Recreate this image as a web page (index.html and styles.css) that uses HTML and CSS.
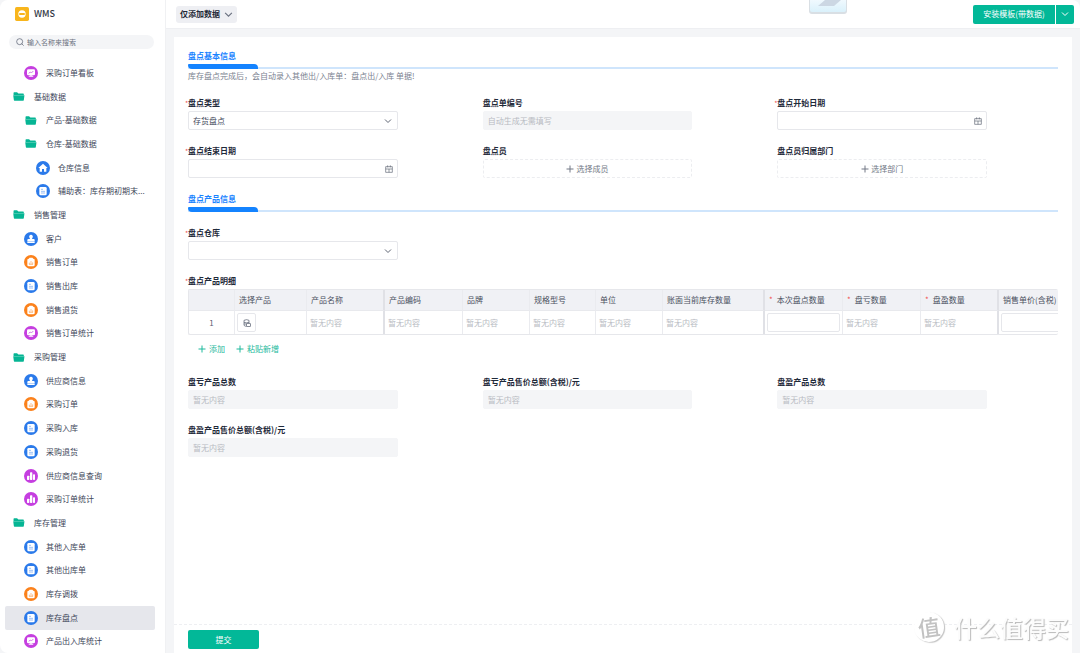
FILE: index.html
```html
<!DOCTYPE html>
<html lang="zh-CN">
<head>
<meta charset="utf-8">
<title>WMS</title>
<link rel="stylesheet" href="styles.css">
</head>
<body>
<svg class="sprite" aria-hidden="true">
  <symbol id="board" viewBox="0 0 42 42"><circle cx="21" cy="21" r="21" fill="#c53ee0"/><rect x="9" y="10" width="24" height="18" rx="4" fill="#fff"/><path d="M14 22l5-4 3 3 6-6" fill="none" stroke="#d478e8" stroke-width="3"/><path d="M13 32h16l-5-4h-6z" fill="#fff"/></symbol>
  <symbol id="bars" viewBox="0 0 42 42"><circle cx="21" cy="21" r="21" fill="#c53ee0"/><rect x="9" y="20" width="7" height="13" rx="2" fill="#fff"/><rect x="18" y="10" width="7" height="23" rx="2" fill="#fff"/><rect x="27" y="16" width="6" height="17" rx="2" fill="#fff"/></symbol>
  <symbol id="doc" viewBox="0 0 42 42"><circle cx="21" cy="21" r="21" fill="#2b7aea"/><rect x="10" y="9" width="22" height="25" rx="4" fill="#fff"/><path d="M15 16h6M15 22h12M15 27h12" stroke="#6aa2f2" stroke-width="2"/></symbol>
  <symbol id="order" viewBox="0 0 42 42"><circle cx="21" cy="21" r="21" fill="#fb811b"/><rect x="10" y="11" width="22" height="23" rx="4" fill="#fff"/><rect x="15" y="8" width="12" height="7" rx="2" fill="#fff"/><path d="M16 28v-5M21 28V18M26 28v-6M15 28h12" fill="none" stroke="#fca45b" stroke-width="2"/></symbol>
  <symbol id="home" viewBox="0 0 42 42"><circle cx="21" cy="21" r="21" fill="#2b7aea"/><path d="M21 8L7 21h4v11h7v-8h6v8h7V21h4z" fill="#fff"/></symbol>
  <symbol id="stamp" viewBox="0 0 42 42"><circle cx="21" cy="21" r="21" fill="#2b7aea"/><path d="M21 8a6 6 0 0 0-4 10l1 3h-5q-3 0-3 3v3h22v-3q0-3-3-3h-5l1-3a6 6 0 0 0-4-10z" fill="#fff"/><rect x="10" y="28" width="22" height="5" fill="#fff"/></symbol>
  <symbol id="folder" viewBox="0 0 36 28"><path d="M1 3q0-2 2-2h9l4 4h15q2 0 2 2v2H1z" fill="#06b594"/><path d="M0 10h35l-2 15q0 2-2 2H4q-2 0-2-2z" fill="#06b594"/></symbol>
  <symbol id="chev" viewBox="0 0 8 8"><path d="M1 2.5l3 3 3-3" fill="none" stroke="currentColor"/></symbol>
  <symbol id="plus" viewBox="0 0 8 8"><path d="M4 .5v7M.5 4h7" fill="none" stroke="currentColor"/></symbol>
  <symbol id="cal" viewBox="0 0 24 24"><path d="M2 5h20v17H2zM2 12h20M8 1v6M16 1v6M12 12v10" fill="none" stroke="currentColor" stroke-width="2"/></symbol>
</svg>
<div class="app">
  <aside class="side">
    <div class="brand">
      <svg class="logo" viewBox="0 0 42 42"><rect width="42" height="42" rx="5" fill="#f8b51c"/><circle cx="21" cy="21" r="11" fill="#fff"/><rect x="12" y="18" width="18" height="6" rx="3" fill="#f8b51c"/></svg>
      <span>WMS</span>
    </div>
    <label class="search">
      <svg viewBox="0 0 24 24"><circle cx="11" cy="11" r="9"/><path d="M17 17l6 6"/></svg>
      <input type="text" placeholder="输入名称来搜索" aria-label="搜索">
    </label>
    <nav class="nav">
      <a class="item l1" href="#"><svg><use href="#board"/></svg><span>采购订单看板</span></a>
      <button class="item"><svg class="f"><use href="#folder"/></svg><span>基础数据</span></button>
      <button class="item l1"><svg class="f"><use href="#folder"/></svg><span>产品-基础数据</span></button>
      <button class="item l1"><svg class="f"><use href="#folder"/></svg><span>仓库-基础数据</span></button>
      <a class="item l2" href="#"><svg><use href="#home"/></svg><span>仓库信息</span></a>
      <a class="item l2" href="#"><svg><use href="#doc"/></svg><span>辅助表：库存期初期末...</span></a>
      <button class="item"><svg class="f"><use href="#folder"/></svg><span>销售管理</span></button>
      <a class="item l1" href="#"><svg><use href="#stamp"/></svg><span>客户</span></a>
      <a class="item l1" href="#"><svg><use href="#order"/></svg><span>销售订单</span></a>
      <a class="item l1" href="#"><svg><use href="#doc"/></svg><span>销售出库</span></a>
      <a class="item l1" href="#"><svg><use href="#order"/></svg><span>销售退货</span></a>
      <a class="item l1" href="#"><svg><use href="#board"/></svg><span>销售订单统计</span></a>
      <button class="item"><svg class="f"><use href="#folder"/></svg><span>采购管理</span></button>
      <a class="item l1" href="#"><svg><use href="#stamp"/></svg><span>供应商信息</span></a>
      <a class="item l1" href="#"><svg><use href="#order"/></svg><span>采购订单</span></a>
      <a class="item l1" href="#"><svg><use href="#doc"/></svg><span>采购入库</span></a>
      <a class="item l1" href="#"><svg><use href="#doc"/></svg><span>采购退货</span></a>
      <a class="item l1" href="#"><svg><use href="#bars"/></svg><span>供应商信息查询</span></a>
      <a class="item l1" href="#"><svg><use href="#bars"/></svg><span>采购订单统计</span></a>
      <button class="item"><svg class="f"><use href="#folder"/></svg><span>库存管理</span></button>
      <a class="item l1" href="#"><svg><use href="#doc"/></svg><span>其他入库单</span></a>
      <a class="item l1" href="#"><svg><use href="#doc"/></svg><span>其他出库单</span></a>
      <a class="item l1" href="#"><svg><use href="#order"/></svg><span>库存调拨</span></a>
      <a class="item l1 active" href="#"><svg><use href="#doc"/></svg><span>库存盘点</span></a>
      <a class="item l1" href="#"><svg><use href="#board"/></svg><span>产品出入库统计</span></a>
    </nav>
  </aside>
  <main class="main">
    <header class="top">
      <button class="mode">仅添加数据<svg><use href="#chev"/></svg></button>
      <div class="split"><button class="install">安装模板(带数据)</button><button class="more" aria-label="更多"><svg><use href="#chev"/></svg></button></div>
    </header>
    <form class="card">
      <div class="body">
        <h2 class="section">盘点基本信息</h2>
        <p class="desc">库存盘点完成后，会自动录入其他出/入库单：盘点出/入库 单据!</p>
        <div class="grid">
          <div class="field req"><label for="type">盘点类型</label><div class="ctl"><select id="type"><option>存货盘点</option></select><svg><use href="#chev"/></svg></div></div>
          <div class="field"><label for="no">盘点单编号</label><div class="ctl"><input id="no" type="text" placeholder="自动生成无需填写" disabled></div></div>
          <div class="field req"><label for="start">盘点开始日期</label><div class="ctl"><input id="start" type="text"><svg class="date"><use href="#cal"/></svg></div></div>
          <div class="field req"><label for="end">盘点结束日期</label><div class="ctl"><input id="end" type="text"><svg class="date"><use href="#cal"/></svg></div></div>
          <div class="field"><label for="member">盘点员</label><button type="button" id="member" class="pick"><svg><use href="#plus"/></svg>选择成员</button></div>
          <div class="field"><label for="dept">盘点员归属部门</label><button type="button" id="dept" class="pick"><svg><use href="#plus"/></svg>选择部门</button></div>
        </div>
        <h2 class="section second">盘点产品信息</h2>
        <div class="grid">
          <div class="field req"><label for="store">盘点仓库</label><div class="ctl"><select id="store"><option></option></select><svg><use href="#chev"/></svg></div></div>
        </div>
        <div class="detail req"><h3 class="label">盘点产品明细</h3>
          <div class="scroll">
            <table>
              <colgroup><col class="c46"><col class="c72"><col class="c78"><col class="c78"><col class="c67"><col class="c66"><col class="c67"><col class="c102"><col class="c78"><col class="c78"><col class="c78"><col class="c78"></colgroup>
              <thead><tr><th></th><th>选择产品</th><th class="thick">产品名称</th><th>产品编码</th><th>品牌</th><th>规格型号</th><th>单位</th><th class="thick">账面当前库存数量</th><th class="must">本次盘点数量</th><th class="must">盘亏数量</th><th class="must thick">盘盈数量</th><th>销售单价(含税)</th></tr></thead>
              <tbody><tr><td class="num">1</td><td class="edit"><button type="button" class="choose" aria-label="选择产品"><svg viewBox="0 0 24 24"><path d="M3 4q8-4 15 0v8M3 4v15q3 3 7 3M3 10q7 3 15 0M3 15h7"/><rect x="11" y="14" width="11" height="8"/></svg></button></td><td class="thick">暂无内容</td><td>暂无内容</td><td>暂无内容</td><td>暂无内容</td><td>暂无内容</td><td class="thick">暂无内容</td><td class="edit"><input type="text" aria-label="本次盘点数量"></td><td>暂无内容</td><td class="thick">暂无内容</td><td class="edit"><input type="text" aria-label="销售单价"></td></tr></tbody>
            </table>
          </div>
          <div class="adds"><button type="button"><svg><use href="#plus"/></svg>添加</button><button type="button"><svg><use href="#plus"/></svg>粘贴新增</button></div>
        </div>
        <div class="grid">
          <div class="field"><label for="s1">盘亏产品总数</label><div class="ctl"><input id="s1" type="text" placeholder="暂无内容" disabled></div></div>
          <div class="field"><label for="s2">盘亏产品售价总额(含税)/元</label><div class="ctl"><input id="s2" type="text" placeholder="暂无内容" disabled></div></div>
          <div class="field"><label for="s3">盘盈产品总数</label><div class="ctl"><input id="s3" type="text" placeholder="暂无内容" disabled></div></div>
          <div class="field"><label for="s4">盘盈产品售价总额(含税)/元</label><div class="ctl"><input id="s4" type="text" placeholder="暂无内容" disabled></div></div>
        </div>
      </div>
      <footer class="foot"><button type="button" class="submit">提交</button></footer>
    </form>
  </main>
</div>
<svg class="tab" viewBox="0 0 38 16"><defs><linearGradient id="g" x1="0" y1="0" x2="0" y2="1"><stop offset="0" stop-color="#f0f9fe"/><stop offset="1" stop-color="#daf1fb"/></linearGradient></defs><path d="M0 0h38v11q0 3-3 3H3q-3 0-3-3z" fill="#d9dfe4"/><path d="M1 0h36v10q0 2-2 2H3q-2 0-2-2z" fill="url(#g)"/><path d="M16 0h16l-7 6H9z" fill="#ccd7e3"/></svg>
<div class="mark"><span class="ring">值</span><span>什么值得买</span></div>
</body>
</html>
```
FILE: styles.css
```css
* { box-sizing: border-box; }
body {
  margin: 0;
  background: #f4f5f7;
  color: #43495a;
  font: 8px/14px "Noto Sans CJK SC", sans-serif;
  overflow: hidden;
}
button, input, select { font: inherit; color: inherit; margin: 0; }
button { cursor: pointer; padding: 0; border: 0; background: none; }
svg { flex: none; display: block; width: 8px; height: 8px; }
.sprite { position: absolute; width: 0; height: 0; }
.app { display: flex; min-height: 100vh; }

.side {
  flex: none;
  width: 166px;
  height: 100vh;
  display: flex;
  flex-direction: column;
  background: #fff;
  border-right: 1px solid #f0f1f3;
  border-radius: 8px 0 0 8px;
}
.brand { display: flex; align-items: center; gap: 5px; height: 28px; padding-left: 15px; font-size: 9px; font-weight: 500; color: #2f3644; }
.logo { width: 14px; height: 14px; }
.search {
  display: flex;
  align-items: center;
  gap: 3px;
  height: 14px;
  margin: 7px 11px 12px 9px;
  padding: 0 7px;
  border-radius: 7px;
  background: #f4f5f7;
  font-size: 7px;
}
.search svg { fill: none; stroke: #4d5566; stroke-width: 2; }
.search input { flex: 1; min-width: 0; padding: 0; border: 0; outline: 0; background: none; }
.search input::placeholder { color: #6c7280; opacity: 1; }
.nav { flex: 1; min-height: 0; display: flex; flex-direction: column; padding: 0 10px 0 5px; }
.item {
  flex: 1 1 0;
  display: flex;
  align-items: center;
  gap: 8px;
  padding-left: 7px;
  border-radius: 2px;
  color: #3e4659;
  text-align: left;
  text-decoration: none;
  white-space: nowrap;
}
.item svg { width: 14px; height: 14px; }
.item svg.f { width: 14px; height: 9px; }
.l1 { padding-left: 19px; }
.l2 { padding-left: 31px; }
.active { background: #e6e7ec; }

.main { flex: 1; min-width: 0; display: flex; flex-direction: column; }
.top {
  display: flex;
  align-items: center;
  justify-content: space-between;
  height: 29px;
  padding: 0 6px 0 10px;
  background: #fff;
  border-bottom: 1px solid #eeeff2;
  border-radius: 0 8px 0 0;
}
.mode {
  display: flex;
  align-items: center;
  gap: 4px;
  height: 17px;
  padding: 0 4px;
  border-radius: 3px;
  background: #eeeff3;
  color: #1f2937;
  font-weight: 700;
}
.mode svg { width: 9px; height: 9px; color: #6a7180; }
.split { display: flex; height: 19px; gap: 1px; color: #fff; }
.install, .more { display: flex; align-items: center; justify-content: center; background: #02b898; }
.install { width: 82px; border-radius: 2px 0 0 2px; }
.more { width: 18px; border-radius: 0 2px 2px 0; }

.card {
  flex: 1;
  display: flex;
  flex-direction: column;
  margin: 8px 8px 0;
  background: #fff;
}
.body { flex: 1; padding: 11px 14px 0; }
.section {
  position: relative;
  margin: 0;
  padding-bottom: 5px;
  color: #1a83ff;
  font-size: 8px;
  line-height: 16px;
  font-weight: 700;
  box-shadow: inset 0 -2px #cfe5fc;
}
.section::after {
  content: "";
  position: absolute;
  left: 0;
  bottom: 0;
  width: 70px;
  height: 5px;
  border-radius: 1px 4px 0 4px;
  background: #1483ff;
}
.second { margin: 13px 0 14px; }
.desc { margin: 0 0 13px; color: #7b8290; }
.grid { display: grid; grid-template-columns: repeat(3, 1fr); row-gap: 14px; margin-right: -14px; }
.field { padding-right: 85px; }
.field label, .label { display: block; margin: 0 0 1px; font-size: 8px; font-weight: 700; line-height: 14px; color: #1f2a3a; }
.req > label::before, .req > .label::before { content: "*"; position: absolute; margin-left: -3px; color: #f0524f; font-size: 7px; font-weight: 400; }
.ctl { position: relative; display: flex; }
.ctl input, .ctl select {
  width: 100%;
  height: 19px;
  padding: 0 4px;
  border: 1px solid #e6e7eb;
  border-radius: 2px;
  background: #fff;
  appearance: none;
}
.ctl input:disabled { background: #f4f5f7; border-color: #f4f5f7; }
.ctl input::placeholder { color: #b8bbc2; opacity: 1; }
.ctl svg { position: absolute; right: 6px; top: 6px; color: #5f6674; pointer-events: none; }
.ctl .date { right: 5px; top: 6px; }
.pick {
  display: flex;
  align-items: center;
  justify-content: center;
  gap: 2px;
  width: 100%;
  height: 19px;
  border: 1px dashed #ecedf0;
  border-radius: 2px;
  color: #737986;
}

.detail { margin: 14px 0 18px; }
.scroll { overflow: hidden; border: 1px solid #e6e7eb; border-right-width: 0; border-radius: 2px; }
table { table-layout: fixed; width: 100%; min-width: 888px; border-collapse: separate; border-spacing: 0; }
.c46 { width: 46px; } .c66 { width: 66px; } .c67 { width: 67px; } .c72 { width: 72px; } .c78 { width: 78px; } .c102 { width: 102px; }
th, td { padding: 0 3px; border-right: 1px solid #eaebef; text-align: left; white-space: nowrap; font-weight: 400; }
th { height: 21px; padding-left: 4px; background: #f0f1f5; color: #4a5060; border-bottom: 1px solid #e8e9ed; }
td { height: 23px; color: #b8bbc2; }
.thick { border-right: 2px solid #e0e1e6; }
.num { text-align: center; color: #5a6070; }
.must::before { content: "*"; color: #f0524f; margin-right: 4px; }
.edit { padding: 0 2px; }
.edit input { display: block; width: 100%; height: 19px; border: 1px solid #e6e7eb; border-radius: 2px; }
.choose { display: grid; place-items: center; width: 19px; height: 19px; border: 1px solid #e6e7eb; border-radius: 2px; }
.choose svg { fill: none; stroke: #4d5566; stroke-width: 2; }
.adds { display: flex; gap: 11px; padding: 7px 0 0 10px; }
.adds button { display: flex; align-items: center; gap: 3px; color: #1cb99c; }
.detail .adds { padding-bottom: 1px; }

.foot { padding: 5px 14px 4px; border-top: 1px dashed #eeeff2; }
.submit { display: block; width: 71px; height: 19px; border-radius: 2px; background: #02b898; color: #fff; }

.tab { position: absolute; top: 0; left: 809px; width: 38px; height: 16px; }
.mark {
  position: fixed;
  right: 11px;
  bottom: 9px;
  display: flex;
  align-items: center;
  gap: 10px;
  color: #fcfcfc;
  font-size: 23px;
  font-weight: 500;
  line-height: 34px;
  text-shadow: 1px 1px 1px #b9b9b9;
  pointer-events: none;
}
.ring { width: 30px; height: 30px; border-radius: 50%; background: #fff; box-shadow: 1px 1px 1px #c4c4c4; color: #c2c2c2; text-align: center; text-shadow: none; font-size: 22px; line-height: 28px; transform: rotate(-8deg); }
```
